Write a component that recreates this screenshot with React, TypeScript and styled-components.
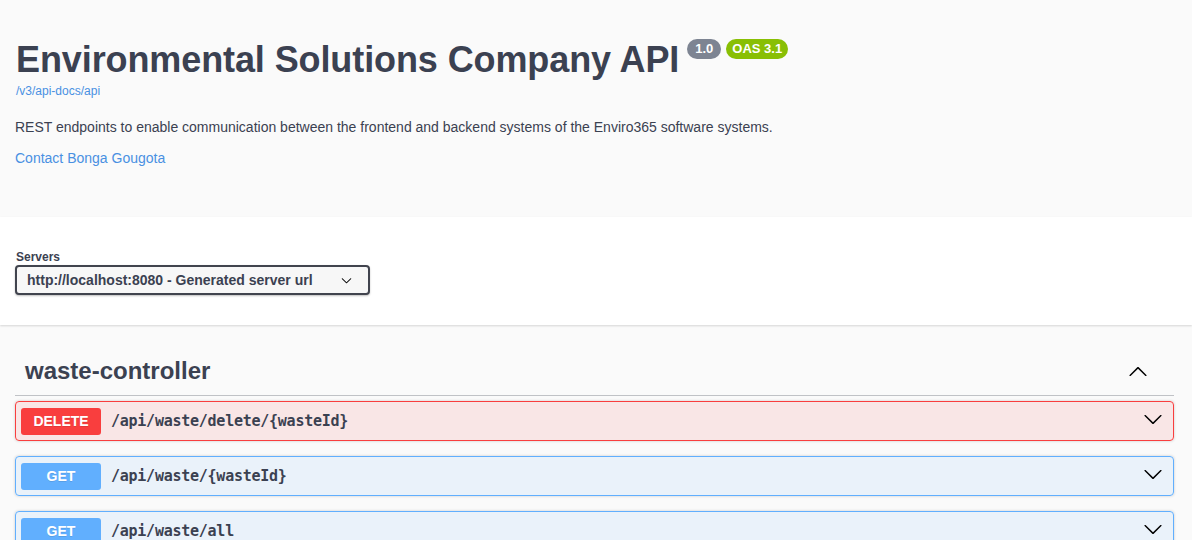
import React from "react";
import styled, { createGlobalStyle } from "styled-components";

const Global = createGlobalStyle`
  html, body { margin: 0; padding: 0; }
  body {
    background: #fafafa;
    font-family: "Liberation Sans", Arial, sans-serif;
    color: #3b4151;
  }
  * { box-sizing: border-box; }
`;

const Page = styled.div`
  width: 1192px;
  overflow: hidden;
`;

const InfoSection = styled.section`
  padding: 39px 18px 49px 15px;
`;

const TitleRow = styled.div`
  display: flex;
  align-items: flex-start;
`;

const Title = styled.h2`
  margin: 0;
  font-size: 36px;
  line-height: 42px;
  font-weight: 700;
  letter-spacing: -0.1px;
  color: #3b4151;
  padding-left: 1px;
`;

const Badge = styled.span<{ $bg: string; $pad: number; $ml: number }>`
  display: inline-block;
  margin-left: ${(p) => p.$ml}px;
  padding: 2px ${(p) => p.$pad}px;
  border-radius: 57px;
  background: ${(p) => p.$bg};
  color: #fff;
  font-size: 13px;
  line-height: 16px;
  font-weight: 700;
`;

const BaseUrl = styled.a`
  display: block;
  margin-top: 3px;
  font-size: 12px;
  line-height: 14px;
  color: #4990e2;
  text-decoration: none;
  padding-left: 1px;
`;

const Description = styled.p`
  margin: 19px 0 0;
  font-size: 14px;
  line-height: 20px;
  color: #3b4151;
`;

const ContactLink = styled.a`
  display: block;
  margin-top: 11px;
  font-size: 14px;
  line-height: 20px;
  color: #4990e2;
  text-decoration: none;
`;

const SchemeContainer = styled.section`
  background: #fff;
  box-shadow: 0 1px 2px 0 rgba(0, 0, 0, 0.15);
  padding: 33px 18px 30px 15px;
`;

const ServersLabel = styled.div`
  font-size: 12px;
  line-height: 14px;
  font-weight: 700;
  color: #3b4151;
  padding-left: 1px;
`;

const Select = styled.div`
  margin-top: 1px;
  width: 355px;
  height: 30px;
  display: flex;
  align-items: center;
  justify-content: space-between;
  padding: 5px 16px 5px 10px;
  border: 2px solid #41444e;
  border-radius: 4px;
  background: #f7f7f7;
  box-shadow: 0 1px 2px 0 rgba(0, 0, 0, 0.25);
  font-size: 14px;
  line-height: 16px;
  font-weight: 700;
  color: #3b4151;
`;

const Operations = styled.section`
  padding: 22px 18px 0 15px;
`;

const TagHeader = styled.div`
  display: flex;
  align-items: center;
  justify-content: space-between;
  padding: 10px 26px 10px 10px;
  border-bottom: 1px solid rgba(59, 65, 81, 0.3);
  margin-bottom: 5px;
`;

const TagTitle = styled.h3`
  margin: 0;
  font-size: 24px;
  line-height: 28px;
  font-weight: 700;
  color: #3b4151;
`;

const OpBlock = styled.div<{ $color: string; $bg: string }>`
  display: flex;
  align-items: center;
  height: 40px;
  margin-bottom: 15px;
  padding: 0 10px 0 5px;
  border: 1px solid ${(p) => p.$color};
  border-radius: 4px;
  background: ${(p) => p.$bg};
  box-shadow: 0 0 3px rgba(0, 0, 0, 0.19);
`;

const Method = styled.span<{ $color: string }>`
  min-width: 80px;
  padding: 6px 0;
  line-height: 15px;
  border-radius: 3px;
  background: ${(p) => p.$color};
  color: #fff;
  text-align: center;
  font-size: 14px;
  font-weight: 700;
  text-shadow: 0 1px 0 rgba(0, 0, 0, 0.1);
`;

const Path = styled.span`
  flex: 1;
  padding: 0 10px;
  font-family: "DejaVu Sans Mono", "Liberation Mono", monospace;
  font-size: 15px;
  letter-spacing: -0.25px;
  font-weight: 700;
  color: #3b4151;
`;

const ArrowSvg = styled.svg<{ $size: number; $nudge: number }>`
  width: ${(p) => p.$size}px;
  height: ${(p) => p.$size}px;
  flex: none;
  margin-bottom: ${(p) => p.$nudge}px;
  fill: #000;
`;

const DOWN =
  "M17.418 6.109c.272-.268.709-.268.979 0s.271.701 0 .969l-7.908 7.83c-.27.268-.707.268-.979 0l-7.908-7.83c-.27-.268-.27-.701 0-.969.271-.268.709-.268.979 0L10 13.25l7.418-7.141z";
const UP =
  "M17.418 14.908c.272.268.709.268.979 0s.271-.701 0-.969l-7.908-7.83c-.27-.268-.707-.268-.979 0l-7.908 7.83c-.27.268-.27.701 0 .969.271.268.709.268.979 0L10 7.767l7.418 7.141z";

const Arrow = ({ up, size = 20, nudge = 0 }: { up?: boolean; size?: number; nudge?: number }) => (
  <ArrowSvg viewBox="0 0 20 20" $size={size} $nudge={nudge}>
    <path d={up ? UP : DOWN} />
  </ArrowSvg>
);

const METHODS = {
  DELETE: { color: "#f93e3e", bg: "rgba(249, 62, 62, 0.1)" },
  GET: { color: "#61affe", bg: "rgba(97, 175, 254, 0.1)" },
} as const;

const ops: { method: keyof typeof METHODS; path: string }[] = [
  { method: "DELETE", path: "/api/waste/delete/{wasteId}" },
  { method: "GET", path: "/api/waste/{wasteId}" },
  { method: "GET", path: "/api/waste/all" },
];

export default function App() {
  return (
    <Page>
      <Global />
      <InfoSection>
        <TitleRow>
          <Title>Environmental Solutions Company API</Title>
          <Badge $bg="#7d8492" $pad={8} $ml={8}>1.0</Badge>
          <Badge $bg="#89bf04" $pad={6} $ml={5}>OAS 3.1</Badge>
        </TitleRow>
        <BaseUrl href="#">/v3/api-docs/api</BaseUrl>
        <Description>
          REST endpoints to enable communication between the frontend and backend systems of the Enviro365 software systems.
        </Description>
        <ContactLink href="#">Contact Bonga Gougota</ContactLink>
      </InfoSection>
      <SchemeContainer>
        <ServersLabel>Servers</ServersLabel>
        <Select>
          <span>http://localhost:8080 - Generated server url</span>
          <Arrow size={11} />
        </Select>
      </SchemeContainer>
      <Operations>
        <TagHeader>
          <TagTitle>waste-controller</TagTitle>
          <Arrow up />
        </TagHeader>
        {ops.map((op, i) => (
          <OpBlock key={i} $color={METHODS[op.method].color} $bg={METHODS[op.method].bg}>
            <Method $color={METHODS[op.method].color}>{op.method}</Method>
            <Path>{op.path}</Path>
            <Arrow nudge={5} />
          </OpBlock>
        ))}
      </Operations>
    </Page>
  );
}
